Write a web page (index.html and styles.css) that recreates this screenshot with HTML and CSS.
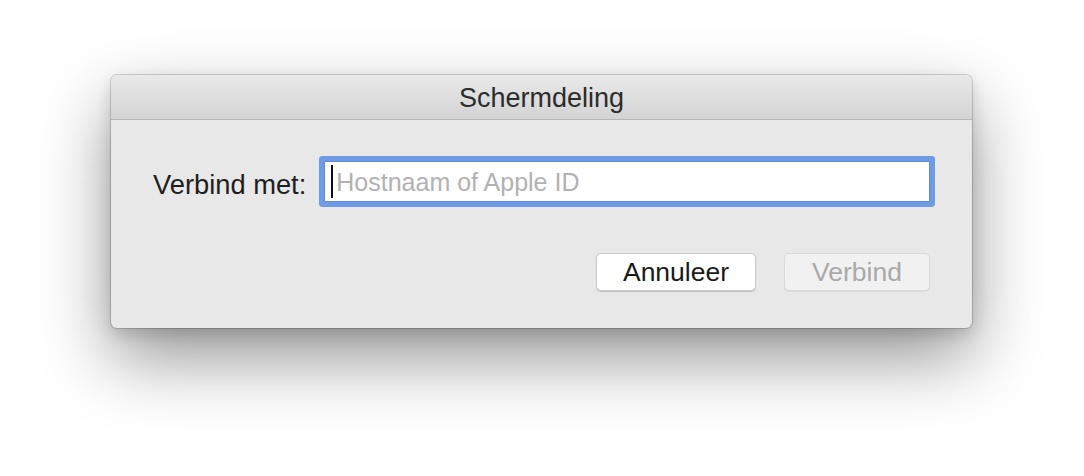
FILE: index.html
```html
<!DOCTYPE html>
<html lang="nl">
<head>
<meta charset="utf-8">
<title>Schermdeling</title>
<link rel="stylesheet" href="styles.css">
</head>
<body>
<div class="stage">
  <div class="window">
    <div class="titlebar">Schermdeling</div>
    <div class="content">
      <div class="row">
        <span class="label">Verbind met:</span>
        <div class="field">
          <span class="caret"></span>
          <span class="placeholder">Hostnaam of Apple ID</span>
        </div>
      </div>
      <div class="buttons">
        <div class="btn">Annuleer</div>
        <div class="btn disabled">Verbind</div>
      </div>
    </div>
  </div>
</div>
</body>
</html>
```

FILE: styles.css
```css
html, body {
  margin: 0;
  padding: 0;
  background: #ffffff;
}
body {
  font-family: "Liberation Sans", Arial, sans-serif;
  width: 1084px;
  height: 476px;
  overflow: hidden;
}
.stage {
  padding: 75px 0 0 111px;
}
.window {
  width: 861px;
  height: 253px;
  box-sizing: border-box;
  background: #e8e8e8;
  border-radius: 6px;
  box-shadow: 0 0 0 1px rgba(0,0,0,0.16), 0 30px 70px rgba(0,0,0,0.42), 0 6px 16px rgba(0,0,0,0.14);
  overflow: hidden;
  display: flex;
  flex-direction: column;
}
.titlebar {
  height: 44px;
  border-bottom: 1px solid #b6b6b6;
  background: linear-gradient(#e9e9e9, #d3d3d3);
  color: #2c2c2c;
  font-size: 27px;
  line-height: 46px;
  text-align: center;
}
.content {
  flex: 1;
  padding: 41px 42px 0 42px;
  display: flex;
  flex-direction: column;
}
.row {
  display: flex;
  align-items: center;
}
.label {
  font-size: 27.3px;
  color: #1e1e1e;
  margin-right: 18px;
  padding-top: 6px;
}
.field {
  flex: 1;
  height: 41px;
  background: #ffffff;
  border: 1px solid #5b8be0;
  box-shadow: 0 0 0 5px #6e9be3;
  border-radius: 1px;
  display: flex;
  align-items: center;
  padding-left: 6px;
  box-sizing: border-box;
}
.caret {
  width: 2px;
  height: 33px;
  background: #111;
  margin-right: 3px;
}
.placeholder {
  font-size: 25px;
  color: #b2b2b2;
  padding-top: 2px;
}
.buttons {
  display: flex;
  justify-content: flex-end;
  gap: 28px;
  margin-top: 51px;
}
.btn {
  height: 38px;
  box-sizing: border-box;
  border-radius: 5px;
  background: #ffffff;
  border: 1px solid #c9c9c9;
  box-shadow: 0 1px 1px rgba(0,0,0,0.18);
  font-size: 26.5px;
  line-height: 37px;
  color: #1a1a1a;
  text-align: center;
  width: 160px;
}
.btn.disabled {
  width: 146px;
  background: #f1f1f1;
  border-color: #d9d9d9;
  box-shadow: 0 1px 1px rgba(0,0,0,0.06);
  color: #a9a9a9;
}
```
